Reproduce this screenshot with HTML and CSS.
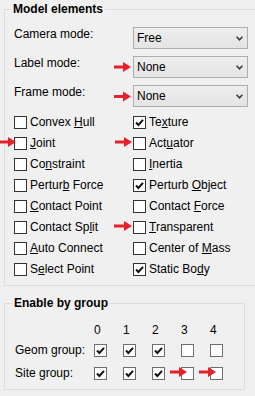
FILE: index.html
```html
<!DOCTYPE html>
<html lang="en">
<head>
    <meta charset="UTF-8">
    <meta name="viewport" content="width=device-width, initial-scale=1.0">
    <title>Rendering options</title>
    <link rel="stylesheet" href="styles.css">
</head>
<body>
    <fieldset class="group model">
        <legend>Model elements</legend>

        <div class="modes">
            <span class="mode-label">Camera mode:</span>
            <div class="combo">
                <span>Free</span>
                <svg class="chevron" width="7" height="5" viewBox="0 0 7 5"><polyline points="0.6,0.8 3.5,3.8 6.4,0.8"/></svg>
            </div>
            <span class="mode-label">Label mode:</span>
            <div class="combo">
                <span>None</span>
                <svg class="chevron" width="7" height="5" viewBox="0 0 7 5"><polyline points="0.6,0.8 3.5,3.8 6.4,0.8"/></svg>
            </div>
            <span class="mode-label">Frame mode:</span>
            <div class="combo">
                <span>None</span>
                <svg class="chevron" width="7" height="5" viewBox="0 0 7 5"><polyline points="0.6,0.8 3.5,3.8 6.4,0.8"/></svg>
            </div>
        </div>

        <div class="checks">
            <label class="check"><span class="box"></span><span>Convex <u>H</u>ull</span></label>
            <label class="check"><span class="box"><svg viewBox="0 0 11 11"><polyline points="2,5.5 4.4,8 9,2.8"/></svg></span><span>Te<u>x</u>ture</span></label>
            <label class="check"><span class="box"></span><span><u>J</u>oint</span></label>
            <label class="check"><span class="box"></span><span>Act<u>u</u>ator</span></label>
            <label class="check"><span class="box"></span><span>Co<u>n</u>straint</span></label>
            <label class="check"><span class="box"></span><span><u>I</u>nertia</span></label>
            <label class="check"><span class="box"></span><span>Pertur<u>b</u> Force</span></label>
            <label class="check"><span class="box"><svg viewBox="0 0 11 11"><polyline points="2,5.5 4.4,8 9,2.8"/></svg></span><span>Perturb <u>O</u>bject</span></label>
            <label class="check"><span class="box"></span><span><u>C</u>ontact Point</span></label>
            <label class="check"><span class="box"></span><span>Contact <u>F</u>orce</span></label>
            <label class="check"><span class="box"></span><span>Contact Sp<u>l</u>it</span></label>
            <label class="check"><span class="box"></span><span><u>T</u>ransparent</span></label>
            <label class="check"><span class="box"></span><span><u>A</u>uto Connect</span></label>
            <label class="check"><span class="box"></span><span>Center of <u>M</u>ass</span></label>
            <label class="check"><span class="box"></span><span>S<u>e</u>lect Point</span></label>
            <label class="check"><span class="box"><svg viewBox="0 0 11 11"><polyline points="2,5.5 4.4,8 9,2.8"/></svg></span><span>Static Bo<u>d</u>y</span></label>
        </div>
    </fieldset>

    <fieldset class="group enable">
        <legend>Enable by group</legend>

        <div class="groups">
            <span></span>
            <span class="col">0</span>
            <span class="col">1</span>
            <span class="col">2</span>
            <span class="col">3</span>
            <span class="col">4</span>

            <span class="row-label">Geom group:</span>
            <span class="box small"><svg viewBox="0 0 11 11"><polyline points="2,5.5 4.4,8 9,2.8"/></svg></span>
            <span class="box small"><svg viewBox="0 0 11 11"><polyline points="2,5.5 4.4,8 9,2.8"/></svg></span>
            <span class="box small"><svg viewBox="0 0 11 11"><polyline points="2,5.5 4.4,8 9,2.8"/></svg></span>
            <span class="box small"></span>
            <span class="box small"></span>

            <span class="row-label">Site group:</span>
            <span class="box small"><svg viewBox="0 0 11 11"><polyline points="2,5.5 4.4,8 9,2.8"/></svg></span>
            <span class="box small"><svg viewBox="0 0 11 11"><polyline points="2,5.5 4.4,8 9,2.8"/></svg></span>
            <span class="box small"><svg viewBox="0 0 11 11"><polyline points="2,5.5 4.4,8 9,2.8"/></svg></span>
            <span class="box small"></span>
            <span class="box small"></span>
        </div>
    </fieldset>

    <!-- red annotation arrows drawn over the dialog -->
    <svg class="arrows" width="255" height="396" viewBox="0 0 255 396">
        <path d="M114 65.5 H123 V62 L131 67 L123 72 V68.5 H114 Z"/>
        <path d="M114 95 H123 V91.5 L131 96.5 L123 101.5 V98 H114 Z"/>
        <path d="M0 140.5 H8 V137 L16 142 L8 147 V143.5 H0 Z"/>
        <path d="M115 140.5 H124 V137 L132 142 L124 147 V143.5 H115 Z"/>
        <path d="M114 224.5 H124 V221 L132 226 L124 231 V227.5 H114 Z"/>
        <path d="M170 370.5 H179 V367 L187 372 L179 377 V373.5 H170 Z"/>
        <path d="M199 370.5 H208 V367 L216 372 L208 377 V373.5 H199 Z"/>
    </svg>
</body>
</html>
```

FILE: styles.css
```css
html, body {
    overflow: hidden;
}
body {
    margin: 0;
    width: 255px;
    height: 396px;
    background-color: #f0f0f0;
    font-family: "Liberation Sans", Arial, sans-serif;
    font-size: 12px;
    line-height: 15px;
    color: #000;
    position: relative;
}
.group {
    box-sizing: border-box;
    min-width: 0;
    border: 1px solid #dcdcdc;
    margin: 2px 0 0 4px;
}
.group legend {
    font-weight: bold;
    padding: 0 2px;
    margin-left: -3px;
    line-height: 15px;
}
/* the first group box is wider than the window: its right edge is cut off */
.model {
    width: 251px;
    border-right: none;
    padding: 0 0 5px 9px;
}
.enable {
    width: 241px;
    margin-top: 10px;
    padding: 0 0 9px 10px;
}
.modes {
    display: grid;
    grid-template-columns: 119px 115px;
    grid-auto-rows: 22px;
    row-gap: 7px;
    margin-top: 10px;
}
.mode-label {
    align-self: start;
}
.combo {
    box-sizing: border-box;
    border: 1px solid #adadad;
    background: linear-gradient(#eeeeee, #e4e4e4);
    display: flex;
    align-items: center;
    justify-content: space-between;
    padding: 0 4px 0 3px;
}
.chevron polyline {
    fill: none;
    stroke: #3c3c3c;
    stroke-width: 1.6;
}
.checks {
    display: grid;
    grid-template-columns: 119px auto;
    grid-auto-rows: 21px;
    margin-top: 5px;
}
.check {
    display: flex;
    align-items: center;
    white-space: nowrap;
}
.check u {
    text-underline-offset: 1px;
}
.box {
    box-sizing: border-box;
    width: 13px;
    height: 13px;
    border: 1px solid #333;
    background: #fff;
    display: inline-flex;
    align-items: center;
    justify-content: center;
    margin-right: 3px;
    flex: none;
}
.box svg {
    width: 11px;
    height: 11px;
}
.box polyline {
    fill: none;
    stroke: #111;
    stroke-width: 2;
}
.box.small {
    border-color: #6e6e6e;
    margin-right: 0;
}
.groups {
    display: grid;
    grid-template-columns: 63px repeat(5, 13px);
    grid-template-rows: 11px 13px 13px;
    column-gap: 16px;
    row-gap: 10px;
    margin-top: 12px;
}
.col {
    height: 11px;
    line-height: 15px;
    align-self: start;
}
.row-label {
    white-space: nowrap;
    line-height: 13px;
}
.arrows {
    position: absolute;
    left: 0;
    top: 0;
    pointer-events: none;
}
.arrows path {
    fill: #e8202a;
}
```
